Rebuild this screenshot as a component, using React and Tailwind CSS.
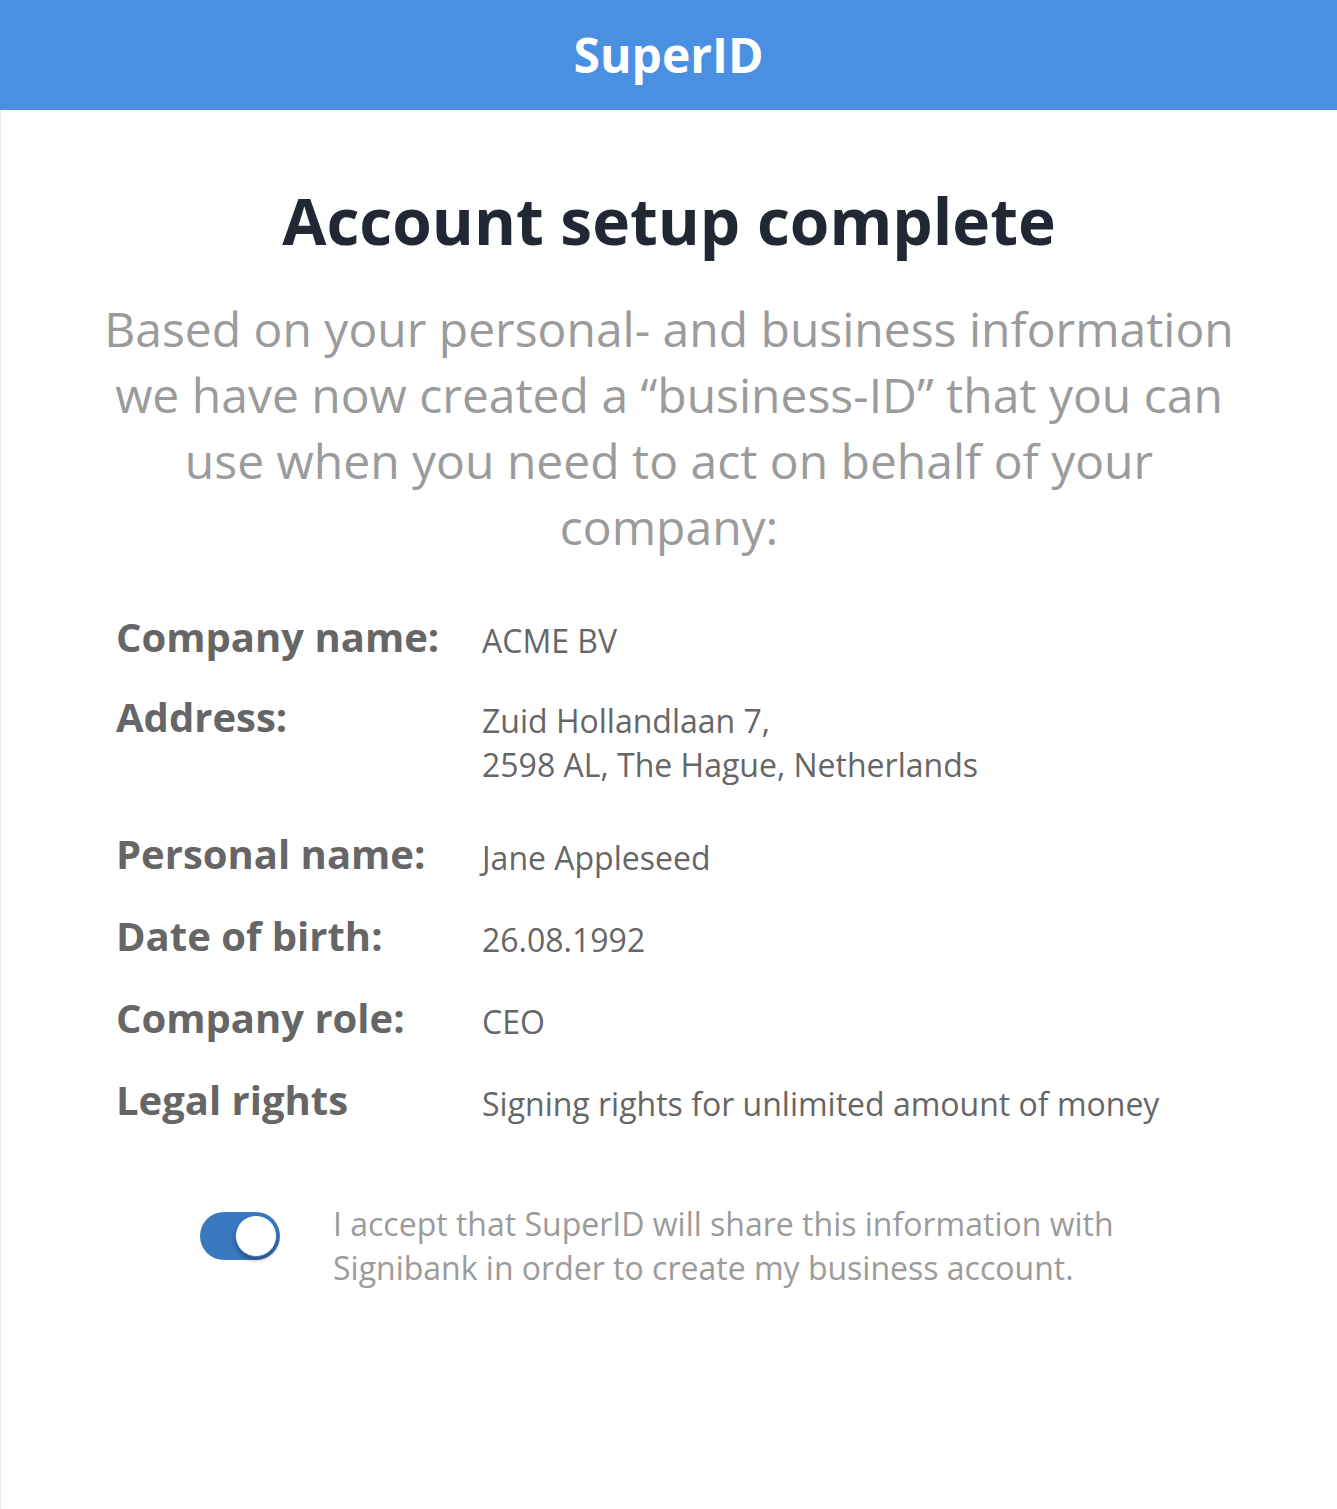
import { useState } from "react";

const ROWS = [
  { label: "Company name:", value: ["ACME BV"], gap: "" },
  { label: "Address:", value: ["Zuid Hollandlaan 7,", "2598 AL, The Hague, Netherlands"], gap: "mt-[32px]" },
  { label: "Personal name:", value: ["Jane Appleseed"], gap: "mt-[45px]" },
  { label: "Date of birth:", value: ["26.08.1992"], gap: "mt-[34px]" },
  { label: "Company role:", value: ["CEO"], gap: "mt-[34px]" },
  { label: "Legal rights", value: ["Signing rights for unlimited amount of money"], gap: "mt-[34px]" },
];

export default function App() {
  const [accepted, setAccepted] = useState(true);

  return (
    <div className="min-h-[1509px] bg-white font-['Open_Sans',sans-serif]">
      {/* Kopbalk */}
      <header className="flex h-[110px] items-center justify-center bg-[#4a90e2]">
        <h1 className="text-[48px] font-bold leading-none text-white">SuperID</h1>
      </header>

      <main className="min-h-[1399px] border-l border-[#ece8e3] pt-[67px]">
        <h2 className="text-center text-[64px] font-bold leading-[88px] text-[#222833]">
          Account setup complete
        </h2>
        <p className="mx-auto mt-[31px] w-[1150px] text-center text-[48px] leading-[66px] text-[#9b9b9b]">
          Based on your personal- and business information we have now created a
          “business-ID” that you can use when you need to act on behalf of your
          company:
        </p>

        {/* Gegevens */}
        <dl className="mt-[55px] pl-[115px]">
          {ROWS.map((r) => (
            <div key={r.label} className={`flex ${r.gap}`}>
              <dt className="w-[366px] shrink-0 text-[40px] font-bold leading-[44px] text-[#666666]">
                {r.label}
              </dt>
              <dd className="pt-[4px] text-[32px] leading-[44px] text-[#666666]">
                {r.value.map((v) => (
                  <div key={v}>{v}</div>
                ))}
              </dd>
            </div>
          ))}
        </dl>

        {/* Akkoord */}
        <div className="mt-[76px] flex items-start pl-[199px]">
          <button
            type="button"
            onClick={() => setAccepted(!accepted)}
            className={`relative mt-[10px] h-[48px] w-[80px] shrink-0 rounded-full ${accepted ? "bg-[#3a78c0]" : "bg-[#d0d0d0]"}`}
          >
            <span
              className={`absolute top-[3px] h-[42px] w-[42px] rounded-full border border-[#3a78c0] bg-white shadow-[0_3px_4px_rgba(0,0,0,0.35)] ${accepted ? "left-[35px]" : "left-[3px]"}`}
            />
          </button>
          <p className="ml-[53px] text-[32px] leading-[44px] text-[#9b9b9b]">
            I accept that SuperID will share this information with
            <br />
            Signibank in order to create my business account.
          </p>
        </div>
      </main>
    </div>
  );
}
